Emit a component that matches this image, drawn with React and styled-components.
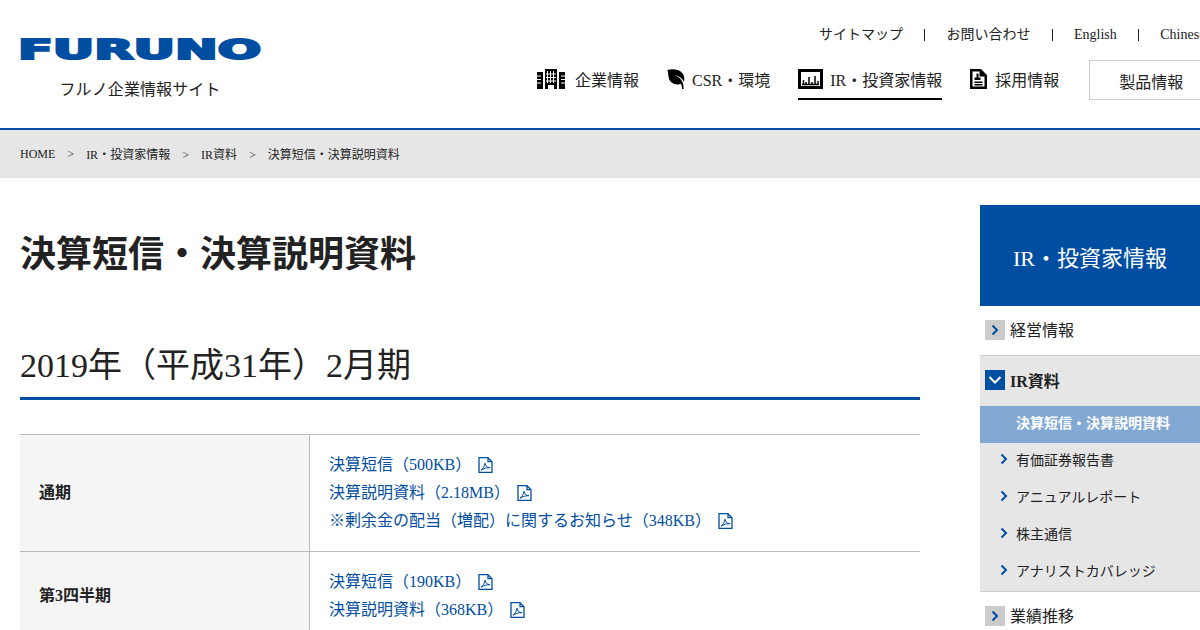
import styled, { createGlobalStyle } from 'styled-components';

const Global = createGlobalStyle`
  html, body { margin:0; padding:0; background:#fff; }
  body { width:1200px; height:630px; overflow:hidden; font-family:"Liberation Serif","Noto Sans CJK JP",serif; color:#222; }
  a { color:inherit; text-decoration:none; }
`;

const Page = styled.div`width:1200px; height:630px; overflow:hidden;`;

const Header = styled.header`height:128px; border-bottom:2px solid #004ea2; display:flex; width:1320px;`;
const LogoBox = styled.div`width:240px; margin:39px 0 0 20px; display:flex; flex-direction:column; align-items:center;`;
const LogoMark = styled.svg`display:block; width:240px; height:21px; overflow:visible;`;
const LogoSub = styled.div`font-size:16px; line-height:24px; margin-top:18px; color:#222; letter-spacing:.1px;`;

const HeaderRight = styled.div`margin-left:277px; display:flex; flex-direction:column;`;
const SubNav = styled.ul`list-style:none; margin:25px 0 0 282px; padding:0; display:flex; font-size:14px; line-height:19px; height:19px;`;
const SubItem = styled.li`
  padding:0 22px 0 0; margin-right:21.5px; position:relative; white-space:nowrap;
  &:not(:last-child)::after { content:""; position:absolute; right:0; top:4px; width:1px; height:12px; background:#222; }
`;
const MainNav = styled.ul`list-style:none; margin:16px 0 0; padding:0; display:flex; align-items:flex-start; font-size:16px;`;
const NavItem = styled.li`
  display:flex; align-items:center; height:38px; margin-right:28px; gap:${p => p.$gap || 10}px; white-space:nowrap;
  border-bottom:2px solid ${p => (p.$active ? '#000' : 'transparent')};
`;
const NavIcon = styled.svg`display:block; flex:none;`;
const ProductBtn = styled.a`
  display:block; box-sizing:border-box; width:200px; height:40px; margin-left:2px; border:1px solid #ccc; border-right:none;
  font-size:16px; line-height:43px; padding-left:29px;
`;

const Crumbs = styled.ol`
  list-style:none; margin:0; padding:0 0 0 20px; height:48px; background:#e6e6e6; display:flex; align-items:center;
  font-size:12px; color:#222;
`;
const Crumb = styled.li`
  white-space:nowrap;
  &:not(:last-child)::after { content:">"; margin:0 12px; }
`;

const Body = styled.div`display:flex; align-items:flex-start;`;
const Content = styled.main`width:900px; margin-left:20px;`;
const Title = styled.h1`margin:55px 0 0; font-size:36px; line-height:44px; font-weight:700; color:#222;`;
const Period = styled.h2`
  margin:63px 0 0; font-size:34px; line-height:52px; font-weight:400; color:#222; padding-bottom:5px;
  border-bottom:3px solid #004ea2;
`;
const Table = styled.div`margin-top:34px; border-top:1px solid #bbb;`;
const TRow = styled.div`display:flex; border-bottom:1px solid #bbb;`;
const TH = styled.div`
  width:290px; box-sizing:border-box; background:#f5f5f5; border-right:1px solid #bbb; padding:0 0 4px 19px;
  display:flex; align-items:center; font-size:16px; font-weight:700;
`;
const TD = styled.div`padding:16px 18px 16px 19px; font-size:16px; line-height:28px;`;
const DocLink = styled.a`display:flex; align-items:center; height:28px; color:#004ea2; gap:7px; white-space:nowrap;`;

const Side = styled.aside`width:220px; margin:27px 0 0 60px; flex:none;`;
const SideHead = styled.div`
  height:101px; background:#004ea2; color:#fff; font-size:22px; display:flex; align-items:center; justify-content:center; box-sizing:border-box;
`;
const SideTop = styled.div`
  display:flex; align-items:center; gap:5px; padding:0 0 2px 5px; font-size:16px; height:50px; box-sizing:border-box;
  font-weight:${p => (p.$open ? 700 : 400)};
  background:${p => (p.$open ? '#e6e6e6' : '#fff')};
  ${p => p.$line && 'border-bottom:1px solid #ccc;'}
`;
const SideLabel = styled.span`margin-bottom:2px;`;
const Arrow = styled.span`
  width:20px; height:20px; display:flex; align-items:center; justify-content:center; flex:none;
  background:${p => (p.$open ? '#004ea2' : '#ccc')};
`;
const SubList = styled.ul`list-style:none; margin:0; padding:0; background:#e6e6e6; border-bottom:1px solid #ccc;`;
const SubLink = styled.li`
  height:37px; box-sizing:border-box; display:flex; align-items:center; font-size:14px; white-space:nowrap; padding:0 0 5px ${p => (p.$current ? 36 : 19)}px; gap:7px;
  ${p => p.$current && 'background:#82a9d3; color:#fff; font-weight:700;'}
`;

const Chevron = () => (
  <svg width="10" height="12" viewBox="0 0 10 12" style={{ display: 'block' }}>
    <path d="M2.500 1.500 7 6l-4.500 4.500" fill="none" stroke="#004ea2" strokeWidth="2" />
  </svg>
);

const ChevronDown = () => (
  <svg width="14" height="10" viewBox="0 0 14 10" style={{ display: 'block' }}>
    <path d="M1.500 2 7 7.500 12.500 2" fill="none" stroke="#fff" strokeWidth="2" />
  </svg>
);

const Pdf = () => (
  <svg width="15" height="16" viewBox="0 0 15 16" style={{ flex: 'none' }}>
    <path d="M1 .7h9l4 4v10.600H1zM10 .7v4h4" fill="none" stroke="#004ea2" strokeWidth="1.300" />
    <path d="M3 13.200c2-1 3.300-3.400 4-7 .3 2.600 2 4.400 5 4.500-3-.1-6.500.8-9 2.500z" fill="none" stroke="#004ea2" strokeWidth="1" />
  </svg>
);

const BuildingIcon = () => (
  <NavIcon width="28" height="20" viewBox="0 0 28 20">
    <path fill="#000" d="M0 3h6v17H0zM22 3h6v17h-6zM8 0h12v20h-3v-4h-6v4H8z" />
    <path stroke="#fff" strokeWidth="1" d="M0 7h4M0 10.500h4M0 14h4M24 7h4M24 10.500h4M24 14h4M10.500 2v12M13.500 2v12M16.500 2v12M9 5h10M9 8.500h10M9 12h10" />
  </NavIcon>
);

const LeafIcon = () => (
  <NavIcon width="18" height="20" viewBox="0 0 18 20">
    <path fill="#000" d="M.5 1C6-.5 13 .5 16 5c1.500 2.500 1.500 5 1 8-1.500-3.500-5-6-9.500-7C11 7.500 14 9.500 15.500 13c.8 2 1.200 4.500 1 7h-1.500c0-2-.4-3.500-1-5-3.500 1-8 .5-10.500-2.500C1 9.500 1.500 5 .5 1z" />
  </NavIcon>
);

const ChartIcon = () => (
  <NavIcon width="25" height="20" viewBox="0 0 25 20">
    <path fill="none" stroke="#000" strokeWidth="3" d="M1.500 1.500h22v17h-22z" />
    <path stroke="#000" strokeWidth="1.500" d="M5.500 15v-4M8 15v-2M11 15V8M14 15v-2M17 15V7M20 15v-3M4 15.500h17" />
  </NavIcon>
);

const DocIcon = () => (
  <NavIcon width="17" height="20" viewBox="0 0 17 20">
    <path fill="#000" fillRule="evenodd" d="M0 0h11l6 6v14H0zM2.500 2.500v15h12V7.500h-5v-5z" />
    <path fill="#000" d="M6.500 4.500h2v4h2V11h-6V8.500h2zM4.500 12.500h8v1.500h-8zM4.500 15h8v1.500h-8z" />
  </NavIcon>
);

const docs = [
  {
    label: '通期',
    links: ['決算短信（500KB）', '決算説明資料（2.18MB）', '※剰余金の配当（増配）に関するお知らせ（348KB）'],
  },
  { label: '第3四半期', links: ['決算短信（190KB）', '決算説明資料（368KB）'] },
];

const subMenu = ['有価証券報告書', 'アニュアルレポート', '株主通信', 'アナリストカバレッジ'];

export default function App() {
  return (
    <Page>
      <Global />
      <Header>
        <LogoBox>
          <LogoMark viewBox="0 0 240 21" aria-label="FURUNO">
            <text
              x="-2"
              y="20"
              textLength="243"
              lengthAdjust="spacingAndGlyphs"
              fontFamily="DejaVu Sans"
              fontWeight="700"
              fontSize="26"
              fill="#004ea2"
              stroke="#004ea2"
              strokeWidth="2"
            >
              FURUNO
            </text>
          </LogoMark>
          <LogoSub>フルノ企業情報サイト</LogoSub>
        </LogoBox>
        <HeaderRight>
          <SubNav>
            <SubItem>サイトマップ</SubItem>
            <SubItem>お問い合わせ</SubItem>
            <SubItem>English</SubItem>
            <SubItem>Chinese</SubItem>
          </SubNav>
          <MainNav>
            <NavItem><BuildingIcon />企業情報</NavItem>
            <NavItem $gap={7}><LeafIcon />CSR・環境</NavItem>
            <NavItem $active $gap={7}><ChartIcon />IR・投資家情報</NavItem>
            <NavItem $gap={8}><DocIcon />採用情報</NavItem>
            <li><ProductBtn>製品情報</ProductBtn></li>
          </MainNav>
        </HeaderRight>
      </Header>
      <Crumbs>
        <Crumb>HOME</Crumb>
        <Crumb>IR・投資家情報</Crumb>
        <Crumb>IR資料</Crumb>
        <Crumb>決算短信・決算説明資料</Crumb>
      </Crumbs>
      <Body>
        <Content>
          <Title>決算短信・決算説明資料</Title>
          <Period>2019年（平成31年）2月期</Period>
          <Table>
            {docs.map(row => (
              <TRow key={row.label}>
                <TH>{row.label}</TH>
                <TD>
                  {row.links.map(link => (
                    <DocLink key={link}>{link}<Pdf /></DocLink>
                  ))}
                </TD>
              </TRow>
            ))}
          </Table>
        </Content>
        <Side>
          <SideHead>IR・投資家情報</SideHead>
          <SideTop $line><Arrow><Chevron /></Arrow><SideLabel>経営情報</SideLabel></SideTop>
          <SideTop $open><Arrow $open><ChevronDown /></Arrow>IR資料</SideTop>
          <SubList>
            <SubLink $current>決算短信・決算説明資料</SubLink>
            {subMenu.map(item => (
              <SubLink key={item}><Chevron />{item}</SubLink>
            ))}
          </SubList>
          <SideTop><Arrow><Chevron /></Arrow><SideLabel>業績推移</SideLabel></SideTop>
        </Side>
      </Body>
    </Page>
  );
}
